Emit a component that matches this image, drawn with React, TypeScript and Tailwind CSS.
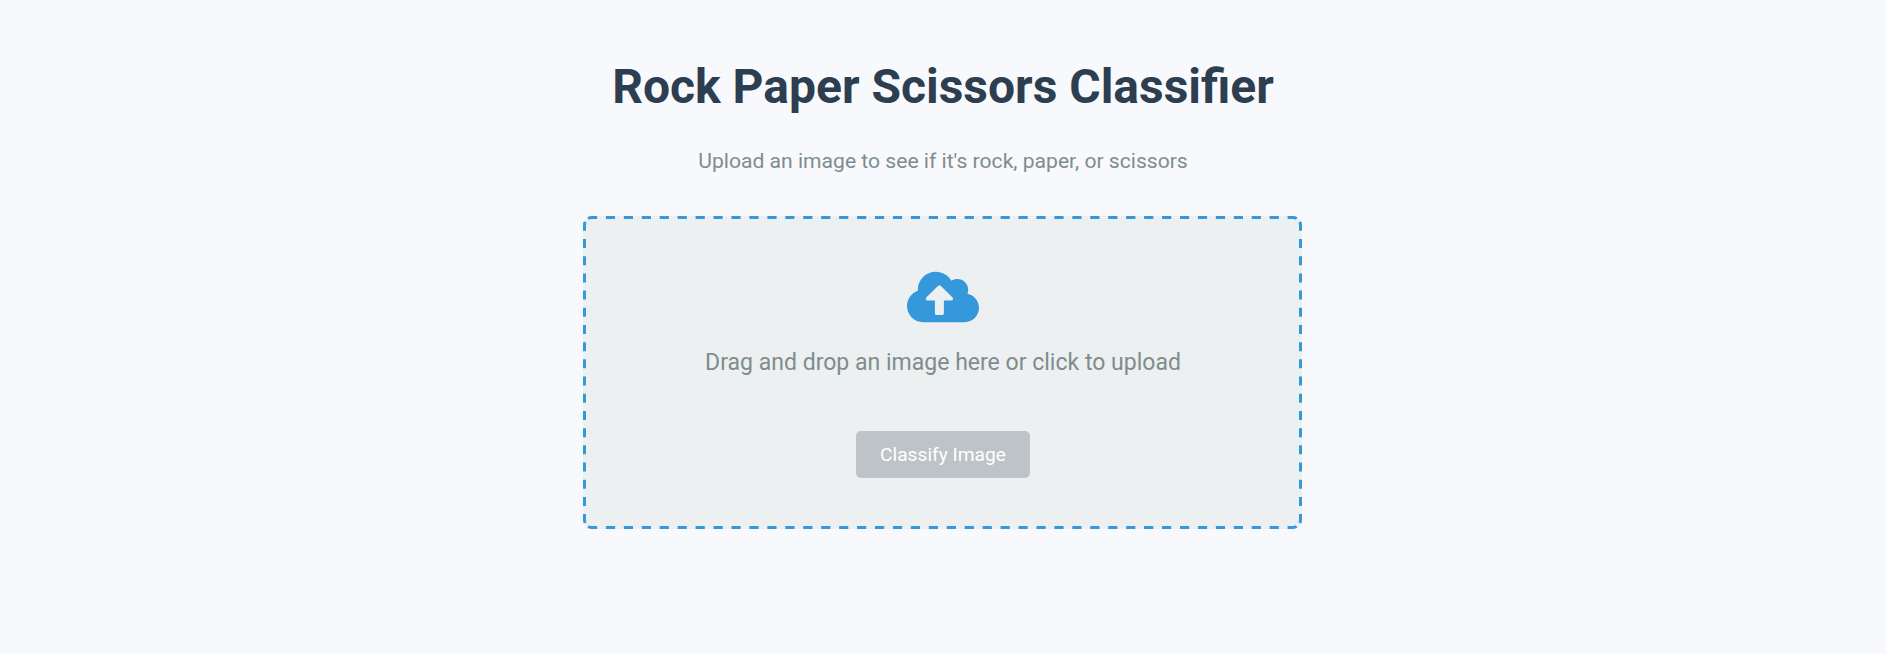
import { FaCloudUploadAlt } from "react-icons/fa";

function DashedFrame() {
  return (
    <svg className="pointer-events-none absolute inset-0" width="719" height="313" viewBox="0 0 719 313" fill="none" stroke="#3498db" strokeWidth="3">
      <g strokeDasharray="9.2 8.74" strokeDashoffset="-1.8">
        <path d="M3.7 3.7A7.5 7.5 0 0 1 9 1.5H710A7.5 7.5 0 0 1 715.3 3.7" />
        <path d="M3.7 309.3A7.5 7.5 0 0 0 9 311.5H710A7.5 7.5 0 0 0 715.3 309.3" />
      </g>
      <g strokeDasharray="9 8.19" strokeDashoffset="-2.7">
        <path d="M3.7 3.7A7.5 7.5 0 0 0 1.5 9V304A7.5 7.5 0 0 0 3.7 309.3" />
        <path d="M715.3 3.7A7.5 7.5 0 0 1 717.5 9V304A7.5 7.5 0 0 1 715.3 309.3" />
      </g>
    </svg>
  );
}

export default function App() {
  return (
    <main className="min-h-screen bg-[#f8f9fd] pt-10 text-center font-['Roboto',sans-serif]">
      <div className="mx-auto flex w-[720px] flex-col items-center">
        <h1 className="mt-[17px] text-[48px] leading-[60px] font-bold text-[#2c3e50]">Rock Paper Scissors Classifier</h1>
        <p className="mt-[31px] text-[21.12px] leading-[25px] text-[#7f8c8d]">Upload an image to see if it's rock, paper, or scissors</p>
        <section className="relative mt-[43px] mr-px flex h-[313px] w-[719px] flex-col items-center rounded-[9px] bg-[#ecf0f1] pt-[45px] pl-px">
          <DashedFrame />
          <FaCloudUploadAlt className="size-[72px] text-[#3498db]" />
          <p className="mt-[15px] text-[23.04px] leading-[30px] text-[#7f8c8d]">Drag and drop an image here or click to upload</p>
          <button className="mt-[53px] h-[47px] w-[174px] rounded-[5px] bg-[#bdc3c7] pt-0.5 text-[19.2px] text-white">Classify Image</button>
        </section>
      </div>
    </main>
  );
}
